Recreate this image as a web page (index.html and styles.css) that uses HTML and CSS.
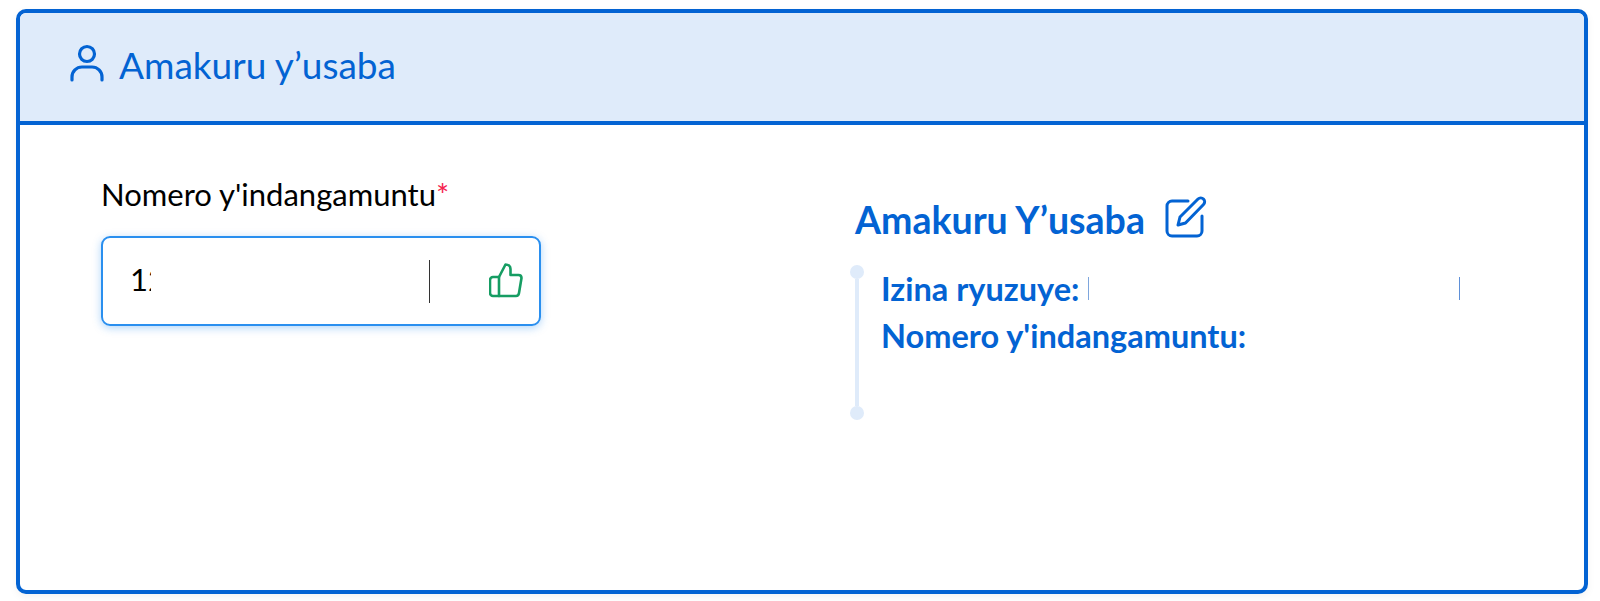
FILE: index.html
```html
<!DOCTYPE html>
<html lang="rw">
<head>
<meta charset="utf-8">
<title>Amakuru y’usaba</title>
<link rel="stylesheet" href="styles.css">
</head>
<body>
<section class="card">
  <header class="card-head">
    <svg class="user-icon" viewBox="0 0 34 38" fill="none" stroke="currentColor" stroke-width="3.2" stroke-linecap="round" stroke-linejoin="round"><circle cx="17" cy="10" r="7.500"/><path d="M2 36v-3a10 10 0 0 1 10-10h10a10 10 0 0 1 10 10v3"/></svg>
    <h2 class="card-title">Amakuru y’usaba</h2>
  </header>
  <div class="card-body">
    <div class="form-col">
      <label class="field-label">Nomero y'indangamuntu<span class="req">*</span></label>
      <div class="input-box">
        <span class="input-value">12</span>
        <span class="caret"></span>
        <svg class="thumb" viewBox="0 0 34 36" fill="none" stroke="currentColor" stroke-width="2.6" stroke-linecap="round" stroke-linejoin="round"><path d="M10 15 16.500 2.500c3 0 5 2 5 4.500v6h8c2 0 3 1.500 3 3l-2.500 15c-.3 2-1.500 3-3 3H10z"/><path d="M10 15H4a3 3 0 0 0-3 3v13a3 3 0 0 0 3 3h6"/></svg>
      </div>
    </div>
    <div class="info-col">
      <div class="info-head">
        <h3 class="info-title">Amakuru Y’usaba</h3>
        <svg class="edit-icon" viewBox="0 0 42 42" fill="none" stroke="currentColor" stroke-width="3" stroke-linecap="round" stroke-linejoin="round"><path d="M23 5H7a5 5 0 0 0-5 5v25a5 5 0 0 0 5 5h25a5 5 0 0 0 5-5V20"/><path d="M13 29l2-8L33 3c1.500-1.500 4-1.500 5.500 0s1.500 4 0 5.500L20.500 27z"/></svg>
      </div>
      <div class="info-list">
        <div class="rail"><span class="dot"></span><span class="line"></span><span class="dot"></span></div>
        <div class="rows">
          <div class="row"><span>Izina ryuzuye:</span><span class="mask"></span></div>
          <div class="row"><span>Nomero y'indangamuntu:</span></div>
        </div>
      </div>
    </div>
  </div>
</section>
</body>
</html>
```

FILE: styles.css
```css
* { box-sizing: border-box; }
html, body { margin: 0; height: 601px; overflow: hidden; background: #fff; }
body {
  padding: 9px 12px 7px 16px;
  font-family: "Lato", "Noto Sans", sans-serif;
}
.card {
  height: 585px;
  border: 4px solid #0363d3;
  border-radius: 10px;
  overflow: hidden;
  display: flex;
  flex-direction: column;
  background: #fff;
  box-shadow: 0 3px 8px rgba(0, 0, 0, .05);
}
.card-head {
  height: 112px;
  flex: none;
  background: #dfebfa;
  border-bottom: 4px solid #0363d3;
  display: flex;
  align-items: center;
  gap: 15px;
  padding-left: 50px;
  padding-bottom: 6px;
  color: #0363d3;
}
.user-icon { width: 34px; height: 38px; margin-top: -3px; }
.card-title { margin: 0; font-size: 37px; font-weight: 400; line-height: 1; }
.card-body { flex: 1; display: flex; padding-left: 81px; }
.form-col { width: 754px; padding-top: 51px; }
.field-label { display: block; font-size: 31px; line-height: 36px; color: #000; }
.req { color: #f5224e; }
.input-box {
  margin-top: 24px;
  width: 440px;
  height: 90px;
  border: 2px solid #2a8fef;
  border-radius: 9px;
  box-shadow: 0 2px 9px rgba(30, 136, 238, .35);
  display: flex;
  align-items: center;
  padding-left: 27px;
  position: relative;
}
.input-value { font-size: 31px; line-height: 36px; color: #000; width: 21px; overflow: hidden; white-space: nowrap; margin-top: -4px; }
.caret { width: 1px; height: 43px; background: #333; margin-left: 278px; }
.thumb { width: 34px; height: 36px; color: #169d63; margin-left: 59px; margin-top: -3px; }
.info-col { padding-top: 71px; flex: 1; }
.info-head { display: flex; align-items: center; gap: 20px; height: 48px; }
.info-title { margin: 0; font-size: 37.500px; font-weight: 700; color: #0363d3; line-height: 1; }
.edit-icon { width: 42px; height: 42px; color: #0363d3; margin-top: -7px; }
.info-list { display: flex; margin-top: 21px; margin-left: -5px; }
.rail { width: 14px; height: 155px; display: flex; flex-direction: column; align-items: center; }
.dot { width: 14px; height: 14px; border-radius: 50%; background: #dfebfa; flex: none; }
.line { width: 4px; flex: 1; background: #dfebfa; }
.rows { margin-left: 17px; padding-top: 0; color: #0363d3; font-size: 32.500px; font-weight: 700; }
.row { display: flex; align-items: center; line-height: 47px; height: 47px; }
.mask {
  width: 372px;
  height: 23px;
  margin-left: 9px;
  border-left: 1px solid #7ea6dd;
  border-right: 1px solid #5f90d8;
}
```
